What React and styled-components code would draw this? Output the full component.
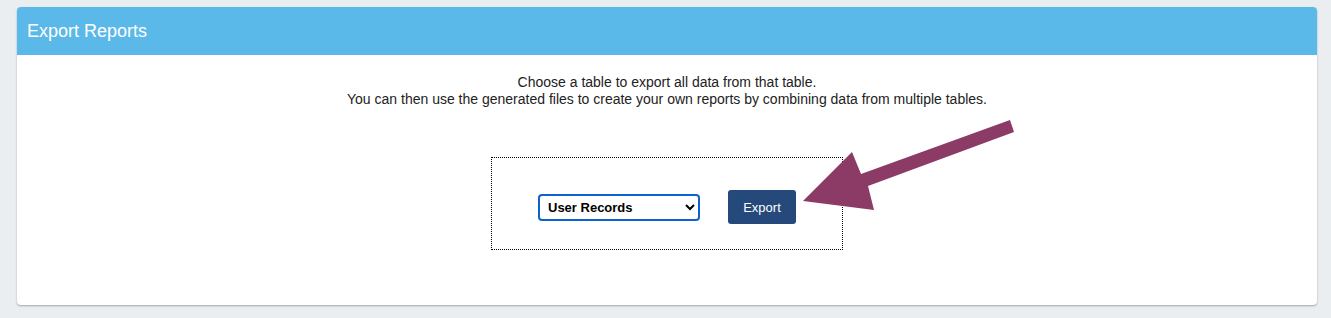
import React from 'react'
import styled, { createGlobalStyle } from 'styled-components'

const GlobalStyle = createGlobalStyle`
  body {
    margin: 0;
    background: #ebeef1;
    font-family: "Liberation Sans", Arial, sans-serif;
  }
`

function App() {
  return (
    <Page>
      <GlobalStyle />
      <Card>
        <Header>Export Reports</Header>
        <Body>
          <Intro>
            Choose a table to export all data from that table.
            <br />
            You can then use the generated files to create your own reports by combining data from multiple tables.
          </Intro>
          <ExportBox>
            <TableSelect defaultValue="users">
              <option value="users">User Records</option>
            </TableSelect>
            <ExportButton>Export</ExportButton>
          </ExportBox>
          <Arrow width="230" height="110" viewBox="0 0 230 110">
            <polygon
              points="208,0 212,12 66,66 72,90 1,81 50,32 59,54"
              fill="#8b3b66"
            />
          </Arrow>
        </Body>
      </Card>
    </Page>
  )
}

// =========================================

const Page = styled.div`
  padding: 7px 14px 13px 17px;
`

const Card = styled.div`
  background: #fff;
  border-radius: 4px;
  box-shadow: 0 1px 2px rgba(0, 0, 0, 0.3);
  overflow: hidden;
  height: 298px;
`

const Header = styled.div`
  background: #5bb9e9;
  color: #fff;
  height: 48px;
  padding: 0 10px;
  display: flex;
  align-items: center;
  font-size: 18px;
`

const Body = styled.div`
  position: relative;
  display: flex;
  flex-direction: column;
  align-items: center;
  padding-top: 19px;
`

const Intro = styled.p`
  margin: 0;
  text-align: center;
  font-size: 14px;
  line-height: 17px;
  color: #222;
`

const ExportBox = styled.div`
  margin-top: 49px;
  box-sizing: border-box;
  width: 352px;
  height: 93px;
  padding-top: 7px;
  border: 1px dotted #000;
  display: flex;
  align-items: center;
  justify-content: center;
  gap: 28px;
`

const TableSelect = styled.select`
  width: 162px;
  height: 27px;
  border: 2px solid #0b62d0;
  border-radius: 4px;
  background: #fff;
  font-family: "Liberation Sans", Arial, sans-serif;
  font-weight: bold;
  font-size: 13px;
  color: #000;
  padding: 0 4px;
  margin-top: 1px;
`

const ExportButton = styled.button`
  width: 68px;
  height: 34px;
  border: none;
  border-radius: 3px;
  background: #25497a;
  color: #fff;
  font-family: "Liberation Sans", Arial, sans-serif;
  font-size: 13px;
`

const Arrow = styled.svg`
  position: absolute;
  left: 785px;
  top: 65px;
`

export default App
